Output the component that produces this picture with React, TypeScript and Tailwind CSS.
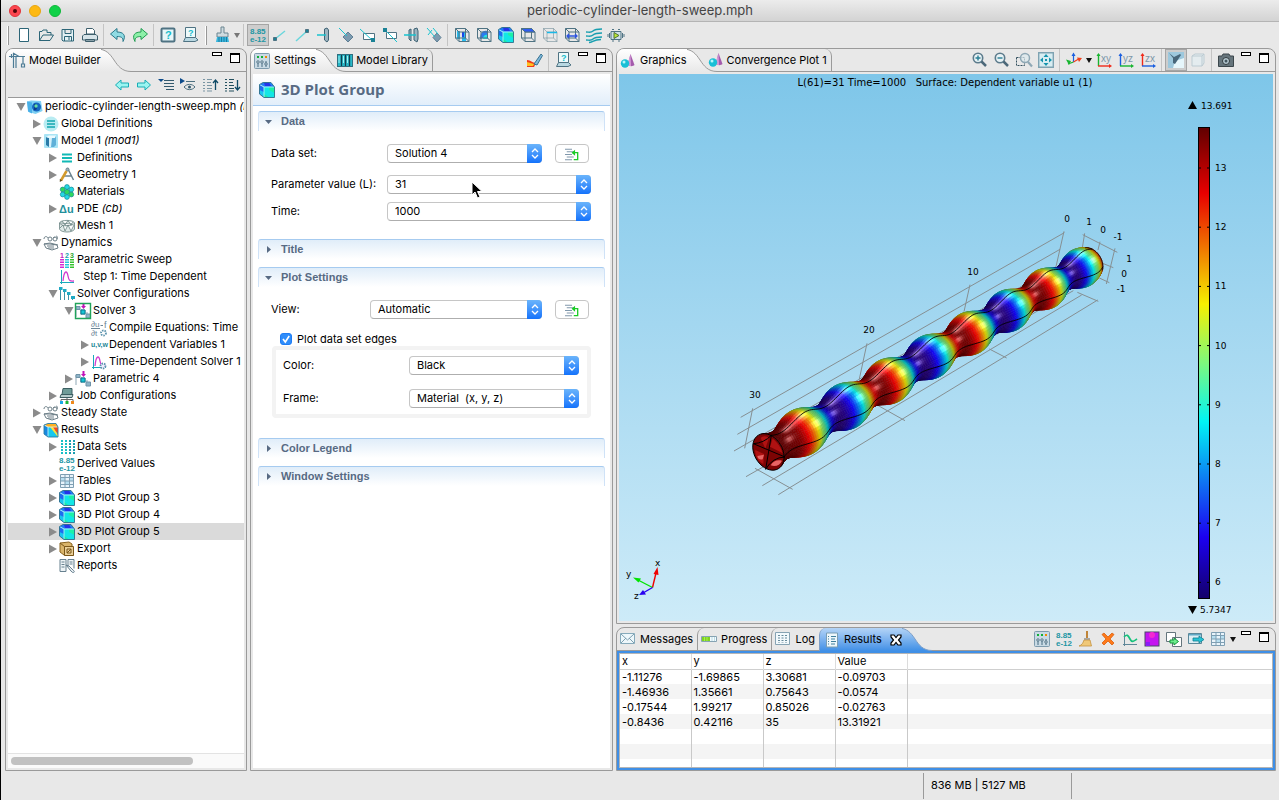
import { useState } from "react";
import type { ReactNode } from "react";

/* ---------- icons (16 × 16 grid) ---------- */

const S = "#4f7383";
const C = "#19c3cf";

const cube = (
  <>
    <path d="M.5 2.500 5 5v10.500L.5 12z" fill="#1c6df0" />
    <path d="M.5 8 5 10v5.500L.5 12z" fill="#19c4f0" />
    <path d="M.5 2.500 4 .5h8L15.500 5H5z" fill="#1f7cf5" />
    <path d="M5 .5h5L12 4H6z" fill="#2433e8" />
    <path d="M5 5h10.500v10.500H5z" fill="#12e6e6" />
    <path d="M10 5h5.500v6L10 8z" fill="#1cf0a8" />
    <path d="M5 12l5 3.500H5z" fill="#1fe8a0" />
    <path d="M.5 2.500 5 5h10.500M5 5v10.500" fill="none" stroke="#a8f6f4" strokeWidth=".9" />
    <path d="M.5 2.500 4 .5h8L15.500 5v10.500H5L.5 12z" fill="none" stroke="#2f6f8c" strokeWidth=".9" />
  </>
);

const wireCube = <path d="M1.500 1.500H11.500L15 5V14.500H5L1.500 11zM5 5H15M5 5 1.500 1.500M5 5V14.500M11.500 1.500V11H1.500M11.500 11 15 14.500" fill="none" stroke={S} />;

const num885 = (
  <g fill="#1e96a4" fontFamily="Liberation Sans" fontWeight="700" fontSize="8">
    <text x="0" y="7">8.85</text>
    <text x="0" y="15">e-12</text>
  </g>
);

const sliders = (
  <>
    <rect x=".5" y=".5" width="15" height="15" rx="1" fill="#c9dae4" stroke="#7e9bad" />
    <path d="M4 8v6M8 8v6M12 8v6" stroke="#496d82" />
    <g fill="#fff" stroke="#496d82"><circle cx="4" cy="9" r="1.200" /><circle cx="8" cy="9" r="1.200" /><circle cx="12" cy="11" r="1.200" /></g>
    <path d="M3 3h2v2H3zM7 3h2v2H7z" fill="#12b035" />
    <path d="M11 3h2v2h-2z" fill="#f08a00" />
  </>
);

const gridIcon = (
  <>
    <rect x="1.500" y="1.500" width="13" height="13" fill="#e9f4fb" />
    <path d="M2 5h4v3H2zM10 5h4v3h-4zM6 8h4v3H6z" fill="#b8dff0" />
    <path d="M1.500 1.500h13v13h-13zM1.500 4.500h13M1.500 8h13M1.500 11.500h13M6 1.500v13M10.500 1.500v13" fill="none" stroke="#7f9fb3" />
  </>
);

const helpDoc = (
  <>
    <path d="M3.500 .5h10v10h-10z" fill="#eefafb" stroke={S} />
    <path d="M3.500 10.500 1.500 14.500h11.500l3-1.500-2.500-2.500z" fill="#b9d8e2" stroke={S} />
    <text x="6" y="9" fontSize="9" fontWeight="700" fontFamily="Liberation Sans" fill="#16bccb">?</text>
  </>
);

const glasses = (
  <g fill="none" stroke="#6d7f88">
    <path d="M1 4C1 1 4 1 5 3M10 3c1-1 2-1 2 0M14 4c1-2 0-3-1-3" />
    <circle cx="7" cy="4" r="2" />
    <circle cx="12" cy="4" r="2" />
    <path d="M1 9l6-1 8 2M1 9l2 4 6 2 6-2-1-3-7-1zM4 11h7M5 13h6" />
  </g>
);

const stepsTree = (
  <>
    <path d="M1 4V14M6 6V12M12 9v4" stroke="#8fa7b5" />
    <path d="M1 3.500h4v3H1zM6 7h4v4H6zM11 11h4.500v4H11z" fill="#8fb4c8" stroke="#6f93a8" />
    <path d="M8.500 0v3" stroke="#c313b9" strokeWidth="2" />
    <path d="M6 3h5L8.500 6z" fill="#c313b9" />
    <path d="M6 7h4v4H6z" fill="#16c6d6" stroke="#0a7c92" />
  </>
);

const sine = (
  <>
    <path d="M2.500 1v14M1 13.500h14" stroke="#1aa9bb" fill="none" />
    <path d="M4 12C5 1 8 1 9 7s3 5 6 5" fill="none" stroke="#d13bd0" strokeWidth="1.300" />
  </>
);

const icons: Record<string, ReactNode> = {
  new: <path d="M3.500 1.500h9v13h-9z" fill="#fff" stroke="#2c6577" />,
  open: <path d="M1.500 13.500V4.500H4l1-1.500h4v2.500h4V8M1.500 13.500 5 8H15.500L12 13.500z" fill="none" stroke="#2c6577" />,
  save: <path d="M2 2.500h11.500V14H3L2 13zM5 2.500v4h6v-4M4.500 14v-4.500h7V14M9 10v3" fill="#e4f1f4" stroke="#2c6577" />,
  print: (
    <>
      <path d="M4.500 7V1.500h6l2 2V7z" fill="#fff" stroke="#3e5f6c" />
      <path d="M2 7.500h12l1.500 1.500v4H.5V9zM3.500 12.500h9v2h-9z" fill="#d7e4e9" stroke="#3e5f6c" />
    </>
  ),
  undo: <path d="M.5 7 7 1.500V5c6 0 9.500 3 6 9.500C13.500 10.500 11 9.500 7 9.500V12.500z" fill="#8fdbe3" stroke="#28788a" />,
  redo: <path d="M15.500 7 9 1.500V5C3 5-.5 8 3 14.500 2.500 10.500 5 9.500 9 9.500V12.500z" fill="#8df0a8" stroke="#1f9c50" />,
  help: (
    <>
      <rect x="1.500" y="1.500" width="13" height="13" rx="1" fill="#e7f6f8" stroke={S} strokeWidth="2" />
      <text x="5" y="12" fontSize="11" fontWeight="700" fontFamily="Liberation Sans" fill="#16bccb">?</text>
    </>
  ),
  helpDoc,
  brush: (
    <>
      <path d="M7 0h3v6h4v4H3V6h4z" fill="#cfdbe0" stroke="#6b8590" />
      <path d="M3 10h11l1 5H2z" fill="#38b6dd" />
      <path d="M5 10v5M7.500 10v5M10 10v5M12.500 10v5" stroke="#1c7ea3" />
    </>
  ),
  num885,
  line1: <><path d="M3 12 13 4" stroke="#69d6dc" strokeWidth="1.500" /><path d="M1.500 10.500h3v3h-3z" fill="#1b8296" stroke={S} /></>,
  line2: <><path d="M2 14 12 5" stroke="#69d6dc" strokeWidth="1.500" /><path d="M11.500 2.500h3v3h-3z" fill="#1b8296" stroke={S} /></>,
  disc: <><path d="M8.500 2 11 1l1.500 2v10L11 15l-2.500-2z" fill="#9db4c0" stroke="#3f6375" /><path d="M1 8h9" stroke={C} strokeWidth="1.500" /></>,
  diamond: <><path d="M10 5l5 5-5 5-5-5z" fill="#7d9bb0" stroke="#5f7f95" /><path d="M1 1l8 8" stroke={C} /></>,
  boxA: <><path d="M3.500 6.500h11v6h-11z" fill="#fff" stroke={S} /><path d="M0 2l12 11" stroke={C} /><path d="M11 11h4v4h-4z" fill="#1b8296" /></>,
  boxB: <><path d="M4.500 5.500h10v6h-10z" fill="#fff" stroke={S} /><path d="M3 3l12 12" stroke={C} /><path d="M1 1h4v4H1z" fill="#1b8296" /></>,
  discs: <><path d="M5 3l2-1v12l-2-2zM10 2l3-1 1 3v8l-1 3-3-2z" fill="#9db4c0" stroke="#3f6375" /><path d="M0 8h12" stroke={C} strokeWidth="1.500" /></>,
  diamonds: <><path d="M11 6l4 4.500-4 4.500-4-4.500z" fill="#7d9bb0" stroke="#5f7f95" /><path d="M1 1l8 9M2 8l4-5M7 1l5 6" stroke={C} /></>,
  cubeSlice: <><path d="M3 4h3v8H3zM8 5h4v9H8z" fill="#25bdf2" /><path d="M8 5h2v5H8z" fill="#1b47e8" />{wireCube}</>,
  cubeIso: <><path d="M4 12c0-6 3-9 7-8v6z" fill="#2b7bf0" /><path d="M7 12c0-3 2-5 5-4v4z" fill="#26e0e0" />{wireCube}</>,
  cube,
  cubeTop: <>{wireCube}<path d="M1.500 1.500h10L15 5H5z" fill="#2f5df2" stroke={S} /></>,
  cubeLine: <><g opacity=".45">{wireCube}</g><path d="M5 5.500h10" stroke="#18b9e8" strokeWidth="1.500" /></>,
  cubeArrow: <>{wireCube}<path d="M3 9h10M5 7 3 9l2 2M11 7l2 2-2 2" fill="none" stroke="#2d54e0" strokeWidth="1.300" /></>,
  stream: <path d="M0 5c3 0 5 1 7-1s5-2 9-2M0 9c3 0 5 1 7-1s5-2 9-2M0 13c3 0 5 1 7-1s5-2 9-2M3 15.500c4 0 4-3 12-3" fill="none" stroke="#199fb0" strokeWidth="1.400" />,
  film: <><path d="M3 4.500h10v8H3zM0 7v3M1.500 6v5M14.500 6v5M16 7v3M4 2.500h2M10 2.500h2M4 14h2M10 14h2" fill="#cfe0e6" stroke={S} /><path d="M6 5.500l5 3-5 3z" fill="#b8e830" stroke="#50703a" /></>,
  builder: <path d="M0 3.500h16M4.500 0v15M2.500 1v4M7 4v11M14 4v7M12.500 11h3v3h-3zM4 0l6 3.500" fill="none" stroke="#4d7c96" strokeWidth="1.200" />,
  sliders,
  library: <><rect x=".5" y="2.500" width="15" height="12" fill="#27b8c8" stroke="#2f6f80" /><path d="M4.500 3v11M8.500 3v11M12.500 3v11" stroke="#123d4c" strokeWidth="1.300" /><path d="M2 4v7M6.500 4v7M10.500 4v7" stroke="#9ff4f4" /></>,
  paint: <><path d="M0 8c4 0 5 3 9 3l-2 4H0z" fill="#f03a1a" /><path d="M0 10l7 2-1 2H0z" fill="#ffc020" /><path d="M7 12 14 2l1.500 1.500L10 13z" fill="#7fb9dd" stroke="#37718f" /></>,
  geo: <><path d="M10.500 1 14.500 12c-1.500 1.500-5 1.500-7 0z" fill="#a45bac" /><path d="M10.500 1l.5 12c-1.500 0-2.500-.3-3.500-1z" fill="#d59ad8" /><circle cx="5" cy="10.500" r="4.200" fill="#19bfd6" /><circle cx="4" cy="9" r="1.500" fill="#b4f6fa" /></>,
  left: <path d="M1.500 8 7 3v3h7.500v4H7v3z" fill="#9bf5f1" stroke="#18adb5" />,
  right: <path d="M14.500 8 9 3v3H1.500v4H9v3z" fill="#9bf5f1" stroke="#18adb5" />,
  listDown: <><path d="M0 2h6L3 5z" fill="#0d4b8a" /><path d="M6 3.500h10M6 6.500h10M6 9.500h10M8 12.500h8" stroke="#33596d" /></>,
  eye: <><path d="M0 1l5 3-5 3z" fill="#0d4b8a" /><path d="M6 4.500h9M4 10c3-3.500 8-3.500 11 0-3 3.500-8 3.500-11 0z" fill="none" stroke="#4d7080" /><circle cx="9.500" cy="10" r="1.500" fill="#33596d" /></>,
  listUp: <><path d="M1 2.500h2M5 2.500h5M1 5.500h2M5 5.500h4M1 8.500h2M5 8.500h5M1 11.500h2M5 11.500h5M1 14h2M5 14h5" stroke="#7a95a3" /><path d="M13.500 13V3M11 6l2.500-3L16 6" fill="none" stroke="#0f4a66" strokeWidth="1.300" /></>,
  listDn: <><path d="M1 2.500h2M5 2.500h5M1 5.500h2M5 5.500h4M1 8.500h2M5 8.500h5M1 11.500h2M5 11.500h5M1 14h2M5 14h5" stroke="#24505f" /><path d="M13.500 3v10M11 10l2.500 3L16 10" fill="none" stroke="#0f4a66" strokeWidth="1.300" /></>,
  root: <><path d="M0 2.500l4-1 10 .5 1.500 10-7 3-7-2z" fill="#7fd0f3" /><path d="M0 2.500l5 1v11l-4-2z" fill="#49b0e8" /><circle cx="9.500" cy="8" r="4.500" fill="#1566c0" /><path d="M7 5c2-1 3 0 3 3s-1 3-3 3z" fill="#0a3b8c" /><circle cx="9" cy="7" r="1.700" fill="#68dfa0" /></>,
  globalDef: <><circle cx="8" cy="8" r="7.500" fill="#b9ecf2" /><path d="M4 5h8M4 8h8M4 11h8" stroke="#12a7b0" strokeWidth="1.600" /></>,
  model: <><rect x="1" y="1" width="14" height="14" rx="1" fill="#a9e4f5" /><path d="M3 4l3 1v9l-3-2z" fill="#2a7ba8" /><path d="M3 4l3-1.500h7L12 5H6z" fill="#eafaff" /><path d="M6 5h6l1-2v9l-2 2H6z" fill="#5fb0d8" /><path d="M6 5h3l-1 9H6z" fill="#d5f1fb" /></>,
  def: <path d="M3 4.500h10M3 8h10M3 11.500h10" stroke="#12b9b6" strokeWidth="2" />,
  geometry: <><path d="M8.500 1l6 12M4 9h9" fill="none" stroke="#6d8490" strokeWidth="1.500" /><circle cx="8.500" cy="2.500" r="1.500" fill="#9fb0b8" stroke="#6d8490" /><path d="M7.500 4 2 13.500" stroke="#d39a2c" strokeWidth="2.500" /><path d="M.8 12v3l2.500-1.500z" fill="#5c4a20" /></>,
  materials: <g strokeWidth=".7" stroke="#0e8a94"><circle cx="8" cy="3" r="2.400" fill="#25d8e4" /><circle cx="3.700" cy="5.500" r="2.400" fill="#2fd85e" /><circle cx="12.300" cy="5.500" r="2.400" fill="#25d8e4" /><circle cx="3.700" cy="10.500" r="2.400" fill="#25d8e4" /><circle cx="12.300" cy="10.500" r="2.400" fill="#2fd85e" /><circle cx="8" cy="8" r="2.600" fill="#2fd85e" /><circle cx="8" cy="13" r="2.400" fill="#25d8e4" /></g>,
  pde: <text x="0" y="12" fontSize="11" fontWeight="700" fontFamily="Liberation Sans" fill="#23909c">Δu</text>,
  mesh: <path d="M.5 5C1 1.500 15 1.500 15.500 5v6c-1 4-14 4-15 0zM.5 5c1 3.500 14 3.500 15 0M3 3l3 4 3-4.500L12 7l2-3M1 10l3-3 2 6 3-6 3 6 3-6M1 5l12 1" fill="#dfe9e7" stroke="#6b8483" strokeWidth=".8" />,
  glasses,
  sweep: (
    <>
      <text x="1" y="6" fontSize="7" fontWeight="700" fontFamily="Liberation Sans" fill="#c322c0">1</text>
      <text x="6" y="6" fontSize="7" fontWeight="700" fontFamily="Liberation Sans" fill="#1a9eb0">2</text>
      <text x="11" y="6" fontSize="7" fontWeight="700" fontFamily="Liberation Sans" fill="#2ca82c">3</text>
      <path d="M3 7v9" stroke="#d32bd0" strokeWidth="4" strokeDasharray="1.500 1" />
      <path d="M8 7v9" stroke="#22c8d8" strokeWidth="4" strokeDasharray="1.500 1" />
      <path d="M13 7v9" stroke="#35c22f" strokeWidth="4" strokeDasharray="1.500 1" />
    </>
  ),
  sine,
  solverCfg: <><path d="M1.500 3v11M5.500 5v9M9.500 8v6M13.500 11v3" stroke="#3e93a8" /><path d="M0 1h3.500v3H0zM4 3h3.500v3H4zM8 6h3.500v3H8zM12 10h4v3h-4z" fill="#1fa9c4" /></>,
  solver: <>{stepsTree}<path d="M.5.500h15v15H.5z" fill="none" stroke="#21a35a" strokeWidth="1.400" /></>,
  param: stepsTree,
  compile: <><g fill="#6d8698" fontFamily="Liberation Sans" fontSize="8"><text x="0" y="7">∂u</text><text x="0" y="16">∂t</text></g><path d="M0 8.500h9" stroke="#6d8698" /><path d="M9.500 5.500h2.500" stroke="#6d8698" /><text x="13" y="8" fontSize="9" fontFamily="Liberation Sans" fill="#6d8698">f</text><circle cx="12.500" cy="13" r="2.500" fill="none" stroke="#5c93ad" strokeWidth="1.800" strokeDasharray="1.500 1" /></>,
  uvw: <text x="0" y="10" fontSize="7" fontWeight="700" fontFamily="Liberation Sans" fill="#1b8797">u,v,w</text>,
  timeSolver: <>{sine}<circle cx="12" cy="12" r="2.500" fill="#eef" stroke="#5c93ad" strokeWidth="1.800" strokeDasharray="1.500 1" /></>,
  job: <><path d="M4 .5h9v6H3z" fill="#6f9c98" stroke="#3c5f62" /><path d="M2 6.500h12l-1 3H1z" fill="#b8cdcc" stroke="#3c5f62" /><path d="M8 10v3M2 13v-1.500h12V13" fill="none" stroke="#666" /><path d="M1 13h3v3H1z" fill="#1aa8e8" /><path d="M6.500 13h3v3h-3z" fill="#1fb63c" /><path d="M12 13h3v3h-3z" fill="#f08a1c" /></>,
  results: <><path d="M1 3l4 2v10l-4-3z" fill="#1688e0" /><path d="M1 3l4-1.500h8L15 5H5z" fill="#ffb020" /><path d="M5 5h10v10H5z" fill="#17c8ee" /><path d="M9 5h6v7z" fill="#f84a1a" /><path d="M7 5h3l5 8v2z" fill="#ffe23a" /><path d="M1 3l4 2h10M5 5v10" fill="none" stroke="#d8f6fa" strokeWidth=".8" /><path d="M1 3l4-1.500h8L15 5v10H5l-4-3z" fill="none" stroke="#2b7da5" strokeWidth=".9" /></>,
  dataSets: <g strokeWidth="2" strokeDasharray="2 1"><path d="M3 1v14M7 1v14" stroke="#16c1c6" /><path d="M11 1v14M15 1v14" stroke="#1b9fb0" /></g>,
  grid: gridIcon,
  export: <><path d="M1 2l9-1 3 2v9l2 2H5l-4-3z" fill="#d9b46a" stroke="#8a6420" /><path d="M5.500 5.500h9v9h-9z" fill="#e9cf98" stroke="#7a5618" /><path d="M1 2l4.500 3.500M8 8h4v4H8zM8 12l4-4" fill="none" stroke="#7a5618" /></>,
  reports: <path d="M1 1.500h6v12H1zM9 1.500h6v9M9 1.500v7M2.500 4h3M2.500 6.500h3M2.500 9h3M10.500 4h3M10.500 6h3M7 7l5 6c2 3 5 1 2-1L10 8z" fill="#edf3f6" stroke="#67808f" />,
  zoomIn: <><circle cx="6" cy="6" r="4.700" fill="#e8f2f5" stroke="#5c7b8c" strokeWidth="1.600" /><path d="M9.500 9.500 14 14" stroke="#4c6879" strokeWidth="2.500" /><path d="M3.500 6h5M6 3.500v5" stroke="#277f95" strokeWidth="1.400" /></>,
  zoomOut: <><circle cx="6" cy="6" r="4.700" fill="#e8f2f5" stroke="#5c7b8c" strokeWidth="1.600" /><path d="M9.500 9.500 14 14" stroke="#4c6879" strokeWidth="2.500" /><path d="M3.500 6h5" stroke="#277f95" strokeWidth="1.400" /></>,
  zoomBox: <><path d="M.5 5.500h8v8h-8z" fill="none" stroke="#33505f" strokeDasharray="2 1" /><circle cx="9" cy="6" r="4.500" fill="#dde9ee" fillOpacity=".7" stroke="#8fa8b5" strokeWidth="1.500" /><path d="M12 10l4 4.500" stroke="#8fa8b5" strokeWidth="2.200" /></>,
  zoomFit: <><path d="M.7.700h14.600v14.600H.7z" fill="#d8edf2" stroke="#7fa3b2" strokeWidth="1.400" /><path d="M8 2l2.500 3h-5zM8 14l2.500-3h-5zM2 8l3-2.500v5zM14 8l-3-2.500v5zM7 7h2v2H7z" fill="#1594ae" /></>,
  axes: <><path d="M7.500 10V3" stroke="#1a5fe0" strokeWidth="1.200" /><path d="M5.500 4l2-3.500 2 3.500z" fill="#1a5fe0" /><path d="M7.500 10 2 12" stroke="#18b530" strokeWidth="1.300" /><path d="M0 7.500l5 1.500L3 13z" fill="#18b530" /><path d="M7.500 10l6-3.500" stroke="#f0401a" strokeWidth="1.200" /><path d="M11 5.500l5 .5-3 4z" fill="#f0401a" /></>,
  xy: <><path d="M2.500 14V2" stroke="#18b530" strokeWidth="1.400" /><path d="M2 14h12" stroke="#f02a1a" strokeWidth="1.400" /><path d="M.5 4 2.500 1l2 3z" fill="#18b530" /><path d="M13 12l3 2-3 2z" fill="#f02a1a" /><text x="5" y="10" fontSize="10" fontFamily="Liberation Sans" fill="#7d97a8">xy</text></>,
  yz: <><path d="M2.500 14V2" stroke="#1a5fe0" strokeWidth="1.400" /><path d="M2 14h12" stroke="#18b530" strokeWidth="1.400" /><path d="M.5 4 2.500 1l2 3z" fill="#1a5fe0" /><path d="M13 12l3 2-3 2z" fill="#18b530" /><text x="5" y="10" fontSize="10" fontFamily="Liberation Sans" fill="#7d97a8">yz</text></>,
  zx: <><path d="M2.500 14V2" stroke="#f02a1a" strokeWidth="1.400" /><path d="M2 14h12" stroke="#1a5fe0" strokeWidth="1.400" /><path d="M.5 4 2.500 1l2 3z" fill="#f02a1a" /><path d="M13 12l3 2-3 2z" fill="#1a5fe0" /><text x="5" y="10" fontSize="10" fontFamily="Liberation Sans" fill="#7d97a8">zx</text></>,
  light: <><rect width="16" height="16" fill="#9dc8dd" /><path d="M7 9l9-3v10H5z" fill="#e6f6fb" /><path d="M1 1l5 4 6-3 1 1-6 9-2-1V6z" fill="#47667a" /></>,
  transparent: <path d="M2 4l3-2h9v9l-2 3H2zM2 4h10v10M12 4l2-2" fill="#e4ecef" stroke="#bccbd2" />,
  camera: <><path d="M.5 4h3.500l1-2h6l1 2h3.500v10.500H.5z" fill="#66757c" stroke="#3c474c" /><circle cx="8" cy="9" r="3.500" fill="#b9ccd4" stroke="#30393d" /><circle cx="8" cy="9" r="1.500" fill="#43565f" /></>,
  mail: <><path d="M.5 2.500h14v10H.5z" fill="#edf7fb" stroke="#86aabb" /><path d="M1 3l6.500 6L14 3M1 12l5-5M14 12 9 7" fill="none" stroke="#7d9fb0" /></>,
  progress: <><path d="M.5 5.500h15v5H.5z" fill="#f4fbfd" stroke="#86a3b3" /><path d="M1 6h8v4H1z" fill="#7fd41e" /><path d="M3.500 6v4M6 6v4" stroke="#a8ee50" /><path d="M11 6v4M13.500 6v4" stroke="#b9dbe6" /></>,
  log: <><path d="M.5 1.500h14v12H.5z" fill="#f2f9fc" stroke="#86a3b3" /><path d="M4 4v8M7.500 4v8M11 4v8" stroke="#65899a" strokeWidth="2" strokeDasharray="1 1.500" /></>,
  resultsTab: <><path d="M2.500 1h11v14h-11z" fill="#eef7fc" stroke="#7b9db2" /><path d="M4 4.500h1M7 4.500h5M4 7h1M7 7h4M4 9.500h1M7 9.500h5M4 12h1M7 12h4" stroke="#3f7f9c" /></>,
  broom: <><path d="M8 0h2v7H8z" fill="#c08438" /><path d="M6 7h6v2H6z" fill="#a8a8a8" /><path d="M6 9h6l1.500 6H1c3-1 4-3 5-6z" fill="#f0c878" stroke="#c59340" strokeWidth=".8" /></>,
  del: <path d="M2 3.500 4 2 8 6l4-4 2 1.500L10 8l4 4-2 2-4-4-4 4-2-2 4-4z" fill="#ff7a1a" stroke="#d8600f" strokeWidth=".8" />,
  plot: <><path d="M2.500 1v14M1 13.500h14" stroke="#5f8798" fill="none" /><path d="M2 6c3-3 4-2 6 2s4 2 7 0" fill="none" stroke="#15c27b" strokeWidth="1.700" /></>,
  magenta: <><rect x="1" y="1" width="14" height="14" fill="#c414f0" stroke="#484868" /><circle cx="8" cy="4" r="3" fill="#f22ad0" /><path d="M2 11h4v4H2z" fill="#8a1cf8" /></>,
  copy: <><path d="M.5 1.500h9v9h-9zM6.500 6.500h9v9h-9z" fill="#fff" stroke="#64757d" /><path d="M4 9h4V7l4.500 3.500L8 14v-2H4z" fill="#6cec8c" stroke="#14983c" /></>,
  exp: <><path d="M.5 2.500h13v10H.5z" fill="#dceef5" stroke="#5b8799" /><path d="M1 3h12v1.500H1z" fill="#60a8c4" /><path d="M5 7h6V5l5 3.500-5 3.500v-2H5z" fill="#25c3d4" stroke="#117f93" strokeWidth=".8" /></>,
  goto: <><path d="M0 2.500h8M2 5.500h8M0 8.500h8M2 11.500h8M0 14.500h8" stroke="#8198ac" strokeWidth="1.200" /><path d="M10 6.500h4.500v8H10" fill="none" stroke="#1bcb27" strokeWidth="1.500" /><path d="M7.500 6.500l4-3.500v7z" fill="#1bcb27" /></>,
};

function Icon({ name }: { name: string }) {
  return (
    <svg viewBox="0 0 16 16" className="size-4 shrink-0 overflow-visible" aria-hidden="true">
      {icons[name]}
    </svg>
  );
}

function Tool({ name, pressed }: { name: string; pressed?: boolean }) {
  return (
    <button
      aria-label={name}
      className={
        pressed
          ? "flex h-[22px] w-[22px] shrink-0 items-center justify-center border border-[#a5a5a5] bg-[#cdcdcd]"
          : "flex h-[22px] w-[22px] shrink-0 items-center justify-center"
      }
    >
      <Icon name={name} />
    </button>
  );
}

const Sep = () => <span className="mx-[2px] h-[22px] w-[2px] shrink-0 border-l border-[#c4c4c4]" />;
const Handle = () => <span className="mx-1 h-[19px] w-[2px] shrink-0 border-r border-[#979797] bg-white" />;
const Caret = ({ grey }: { grey?: boolean }) => (
  <button aria-label="More" className="flex h-[22px] w-2 shrink-0 items-center justify-center">
    <svg viewBox="0 0 6 5" className="h-[5px] w-[6px]"><path d="M0 0h6L3 5z" fill={grey ? "#777" : "#111"} /></svg>
  </button>
);

function MinMax() {
  return (
    <div className="flex pr-[2px] pb-[6px]">
      <button aria-label="Minimize" className="flex h-[14px] w-[18px] items-start justify-center pt-[2px]">
        <span className="h-1 w-[10px] border border-black bg-white" />
      </button>
      <button aria-label="Maximize" className="flex h-[14px] w-[18px] items-center justify-center pt-[2px]">
        <span className="h-[10px] w-[10px] border border-t-2 border-black bg-white" />
      </button>
    </div>
  );
}

/* ---------- tabs ---------- */

function Swoop({ blue }: { blue?: boolean }) {
  const id = blue ? "swoop-blue" : "swoop-grey";
  return (
    <svg viewBox="0 0 34 23" className="-ml-1 h-[23px] w-[34px] shrink-0" aria-hidden="true">
      <defs>
        <linearGradient id={id} x1="0" y1="0" x2="0" y2="1">
          <stop offset="0" stopColor={blue ? "#b4d4f6" : "#ffffff"} />
          <stop offset="1" stopColor={blue ? "#3f8fe6" : "#e8e8e8"} />
        </linearGradient>
      </defs>
      <path d="M0 0C9 0 13 5 17 11S25 22.500 34 22.500V23H0z" fill={`url(#${id})`} />
      <path d="M0 0C9 0 13 5 17 11S25 22.500 34 22.500" fill="none" stroke={blue ? "#7d9fc8" : "#9a9a9a"} />
    </svg>
  );
}

function ActiveTab({ icon, label }: { icon: string; label: string }) {
  return (
    <>
      <button className="relative z-10 flex h-[23px] shrink-0 items-center gap-1 rounded-tl-[7px] bg-linear-to-b from-white to-[#e8e8e8] pl-[3px]">
        <Icon name={icon} />
        {label}
      </button>
      <Swoop />
    </>
  );
}

const panel = "flex flex-col rounded-t-[8px] border border-[#9a9a9a] bg-[#e8e8e8]";
const strip = "flex h-[23px] min-w-0 flex-1 items-center border-b border-[#9a9a9a]";
const sideTab = "-ml-[9px] flex h-[23px] shrink-0 items-center gap-[3px] rounded-tr-[7px] border-r border-[#9a9a9a] pr-1";

/* ---------- model tree ---------- */

type Row = [level: number, arrow: "open" | "closed" | "", icon: string, label: string, tag?: string];

const rows: Row[] = [
  [0, "open", "root", "periodic-cylinder-length-sweep.mph", "(root)"],
  [1, "closed", "globalDef", "Global Definitions"],
  [1, "open", "model", "Model 1", "(mod1)"],
  [2, "closed", "def", "Definitions"],
  [2, "closed", "geometry", "Geometry 1"],
  [2, "", "materials", "Materials"],
  [2, "closed", "pde", "PDE", "(cb)"],
  [2, "", "mesh", "Mesh 1"],
  [1, "open", "glasses", "Dynamics"],
  [2, "", "sweep", "Parametric Sweep"],
  [2, "", "sine", "\u00a0 Step 1: Time Dependent"],
  [2, "open", "solverCfg", "Solver Configurations"],
  [3, "open", "solver", "Solver 3"],
  [4, "", "compile", "Compile Equations: Time"],
  [4, "closed", "uvw", "Dependent Variables 1"],
  [4, "closed", "timeSolver", "Time-Dependent Solver 1"],
  [3, "closed", "param", "Parametric 4"],
  [2, "closed", "job", "Job Configurations"],
  [1, "closed", "glasses", "Steady State"],
  [1, "open", "results", "Results"],
  [2, "closed", "dataSets", "Data Sets"],
  [2, "", "num885", "Derived Values"],
  [2, "closed", "grid", "Tables"],
  [2, "closed", "cube", "3D Plot Group 3"],
  [2, "closed", "cube", "3D Plot Group 4"],
  [2, "closed", "cube", "3D Plot Group 5"],
  [2, "closed", "export", "Export"],
  [2, "", "reports", "Reports"],
];

const indents = ["pl-2", "pl-6", "pl-10", "pl-14", "pl-[72px]"];

function ModelBuilder() {
  const [selected, setSelected] = useState(25);
  return (
    <section className={`${panel} w-[242px] shrink-0`}>
      <div className="flex">
        <ActiveTab icon="builder" label="Model Builder" />
        <div className={`${strip} justify-end`}><MinMax /></div>
      </div>
      <div className="flex h-[25px] shrink-0 items-center justify-end pr-[3px]">
        {["left", "right", "listDown", "eye", "listUp", "listDn"].map((n) => <Tool key={n} name={n} />)}
      </div>
      <div className="mx-[2px] mb-[2px] flex min-h-0 flex-1 flex-col border-t border-[#9a9a9a] bg-white">
        <ul className="flex-1 overflow-hidden">
          {rows.map(([level, arrow, icon, label, tag], i) => (
            <li key={i}>
              <button
                onClick={() => setSelected(i)}
                className={`flex h-[17px] w-full items-center whitespace-nowrap ${indents[level]} ${selected === i ? "bg-[#dadada]" : ""}`}
              >
                <svg viewBox="0 0 11 10" className="h-[10px] w-[11px] shrink-0">
                  {arrow && <path d={arrow === "open" ? "M.5 1h9L5 9z" : "M1 .500 9 5 1 9.500z"} fill="#8b8b8b" />}
                </svg>
                <Icon name={icon} />
                <span className="pl-[2px]">
                  {label} {tag && <i>{tag}</i>}
                </span>
              </button>
            </li>
          ))}
        </ul>
        <div className="flex h-[15px] shrink-0 items-center border-t border-[#e3e3e3] bg-[#fafafa] px-[3px]">
          <div className="h-2 w-[79%] rounded-full bg-[#c1c1c1]" />
        </div>
      </div>
    </section>
  );
}

/* ---------- settings ---------- */

function Select({ id, options, children }: { id: string; options: string[]; children?: ReactNode }) {
  return (
    <div className="relative flex flex-1">
      <select id={id} className="h-[19px] w-full appearance-none rounded-[4px] border border-[#c6c6c6] border-b-[#aeaeae] bg-white pr-5 pl-[7px] text-[11px] text-black">
        {options.map((o) => <option key={o}>{o}</option>)}
      </select>
      <span className="pointer-events-none absolute top-0 right-0 flex h-[19px] w-[15px] items-center justify-center rounded-r-[4px] bg-linear-to-b from-[#6ab4fb] to-[#1272fb]">
        <svg viewBox="0 0 8 11" className="h-[11px] w-2"><path d="M1 4l3-3 3 3M1 7l3 3 3-3" fill="none" stroke="#fff" strokeWidth="1.300" /></svg>
      </span>
      {children}
    </div>
  );
}

function Section({ title, open, children }: { title: string; open?: boolean; children?: ReactNode }) {
  return (
    <div>
      <h3 className="h-5 rounded-t-[3px] border-x border-t border-x-[#cfe2f7] border-t-[#a6cbf0] bg-linear-to-b from-[#e0edf9] to-white">
        <button className="flex h-[19px] w-full items-center gap-2 pl-[5px] font-['Liberation_Sans',sans-serif] text-[11px] font-bold text-[#576a83]">
          <svg viewBox="0 0 9 9" className="size-[9px]">
            <path d={open ? "M1 3h7L4.500 7z" : "M3 1l4 3.500L3 8z"} fill="#576a83" />
          </svg>
          {title}
        </button>
      </h3>
      {children}
    </div>
  );
}

const GotoButton = () => (
  <button aria-label="Go to source" className="mr-[2px] ml-[13px] flex h-[19px] w-[34px] items-center justify-center rounded-[4px] border border-[#c6c6c6] bg-white">
    <svg viewBox="0 0 16 16" className="h-[14px] w-[14px]">{icons.goto}</svg>
  </button>
);

function Settings() {
  const [edges, setEdges] = useState(true);
  return (
    <section className={`${panel} w-[363px] shrink-0`}>
      <div className="flex">
        <ActiveTab icon="sliders" label="Settings" />
        <div className={strip}>
          <button className={sideTab}>
            <Icon name="library" />
            Model Library
          </button>
          <div className="flex-1" />
          <Tool name="paint" /><Sep /><Tool name="helpDoc" />
          <MinMax />
        </div>
      </div>
      <div className="m-[2px] flex-1 bg-white">
        <h2 className="flex h-8 items-center gap-[6px] border-b border-[#a6cbf0] bg-linear-to-b from-white to-[#e2eefa] pl-[6px] font-['Open_Sans',sans-serif] text-[15px] font-bold text-[#576a83]">
          <Icon name="cube" />
          3D Plot Group
        </h2>
        <form className="flex flex-col px-[5px] pt-[5px]">
          <Section title="Data" open>
            <div className="flex flex-col pt-[13px] pr-[14px] pb-[18px] pl-[13px]">
              <div className="flex items-center">
                <label htmlFor="dataset" className="w-[116px] shrink-0">Data set:</label>
                <Select id="dataset" options={["Solution 4", "Solution 3"]} />
                <GotoButton />
              </div>
              <div className="mt-3 flex items-center">
                <label htmlFor="param" className="w-[116px] shrink-0">Parameter value (L):</label>
                <Select id="param" options={["31", "32"]}>
                  <svg viewBox="0 0 12 18" className="pointer-events-none absolute top-[6px] left-[84px] h-[18px] w-3">
                    <path d="M1 1v13l3-3 2.500 6 2.500-1-2.500-5.500H11z" fill="#000" stroke="#fff" />
                  </svg>
                </Select>
              </div>
              <div className="mt-2 flex items-center">
                <label htmlFor="time" className="w-[116px] shrink-0">Time:</label>
                <Select id="time" options={["1000", "900"]} />
              </div>
            </div>
          </Section>
          <div className="flex flex-col gap-2">
            <Section title="Title" />
            <Section title="Plot Settings" open>
              <div className="flex flex-col pt-[13px] pr-[14px] pb-3 pl-[13px]">
                <div className="flex items-center">
                  <label htmlFor="view" className="w-[99px] shrink-0">View:</label>
                  <Select id="view" options={["Automatic", "View 1"]} />
                  <GotoButton />
                </div>
                <label className="mt-[13px] flex h-[14px] items-center gap-[5px] pl-[9px]">
                  <span className="relative flex size-3">
                    <input type="checkbox" checked={edges} onChange={() => setEdges(!edges)} className="size-3 appearance-none rounded-[3px] border border-[#c0c0c0] bg-white checked:border-[#1e7cf4] checked:bg-[#2f8dfa]" />
                    {edges && (
                      <svg viewBox="0 0 12 12" className="pointer-events-none absolute inset-0 size-3">
                        <path d="M3 6l2.300 3L9.200 3" fill="none" stroke="#fff" strokeWidth="1.600" />
                      </svg>
                    )}
                  </span>
                  Plot data set edges
                </label>
                <div className="ml-px flex flex-col gap-[14px] rounded-[4px] border-4 border-[#f3f3f3] pt-[6px] pr-2 pb-[6px] pl-[7px]">
                  <div className="flex items-center">
                    <label htmlFor="color" className="w-[126px] shrink-0">Color:</label>
                    <Select id="color" options={["Black", "Gray"]} />
                  </div>
                  <div className="flex items-center">
                    <label htmlFor="frame" className="w-[126px] shrink-0">Frame:</label>
                    <Select id="frame" options={["Material\u00a0 (x, y, z)", "Spatial"]} />
                  </div>
                </div>
              </div>
            </Section>
            <Section title="Color Legend" />
            <Section title="Window Settings" />
          </div>
        </form>
      </div>
    </section>
  );
}

/* ---------- 3D surface plot ---------- */

type Vec = [number, number, number];
const dot = (a: Vec, b: Vec) => a[0] * b[0] + a[1] * b[1] + a[2] * b[2];
const unit = (a: Vec): Vec => {
  const n = Math.hypot(a[0], a[1], a[2]);
  return [a[0] / n, a[1] / n, a[2] / n];
};
const clamp = (v: number) => Math.max(0, Math.min(1, v));
const RAD = Math.PI / 180;

const T0 = -0.24;
const T1 = 7.76;
const TILT = 0.72;
const AXIS: Vec = [0.598, 0.352, -0.72];
const SIDE: Vec = [0.507, -0.862, 0];
const FRONT: Vec = [0.62, 0.365, 0.694];

const radius = (t: number) => (1 - 0.024 * t) * (59 - 13 * Math.cos(2 * Math.PI * t));
const center = (t: number) => {
  const x = 148 + 136.5 * t - 2.1 * t * t;
  return [x, 657 - (x - 283) * 0.5886];
};

function surfacePoint(t: number, deg: number) {
  const [cx, cy] = center(t);
  const a = radius(t);
  const s = Math.sin(deg * RAD) * a;
  const c = Math.cos(deg * RAD) * a * TILT;
  return [cx + s * 0.507 + c * 0.862, cy + s * 0.862 - c * 0.507];
}

function normalAt(t: number, deg: number): Vec {
  const s = Math.sin(deg * RAD);
  const c = Math.cos(deg * RAD);
  const slope = 0.378 * Math.sin(2 * Math.PI * t);
  return unit([
    SIDE[0] * s + FRONT[0] * c - slope * AXIS[0],
    SIDE[1] * s + FRONT[1] * c - slope * AXIS[1],
    SIDE[2] * s + FRONT[2] * c - slope * AXIS[2],
  ]);
}

function jet(u: number): Vec {
  const tint = 0.16 * clamp(1 - u / 0.25);
  return [
    clamp(1.5 - Math.abs(4 * u - 3)) + tint,
    clamp(1.5 - Math.abs(4 * u - 2)),
    clamp(1.5 - Math.abs(4 * u - 1)),
  ];
}

function valueAt(t: number) {
  if (t < 0.1) return 1;
  const v = t > 7.1 ? -Math.cos(Math.PI * (t - 7.08) * 1.15) : Math.cos(Math.PI * (t - 0.1));
  return Math.sign(v) * Math.pow(Math.abs(v), 1.35);
}

const H1 = unit([0.6, 0.38, 0.7]);
const H2 = unit([0.02, 0.72, 0.69]);

function shade(t: number, deg: number) {
  const n = normalAt(t, deg);
  const base = jet((valueAt(t) + 1) / 2);
  const diffuse = 0.55 + 0.42 * clamp(n[2]);
  const spec = 0.42 * Math.pow(clamp(dot(n, H1)), 60) + 0.5 * Math.pow(clamp(dot(n, H2)), 50);
  const rgb = base.map((k) => Math.round(255 * clamp(k * diffuse + spec)));
  return `rgb(${rgb[0]},${rgb[1]},${rgb[2]})`;
}

const pts = (list: number[][]) => list.map((p) => `${p[0].toFixed(1)},${p[1].toFixed(1)}`).join(" ");

const SLICES = 220;
const STEP = 8;
const facets: { points: string; fill: string }[] = [];
for (let i = SLICES - 1; i >= 0; i--) {
  const a = T0 + ((T1 - T0) * i) / SLICES;
  const b = T0 + ((T1 - T0) * (i + 1)) / SLICES;
  for (let d = -120; d < 120; d += STEP) {
    if (normalAt((a + b) / 2, d + STEP / 2)[2] <= -0.1) continue;
    facets.push({
      points: pts([surfacePoint(a, d), surfacePoint(b, d), surfacePoint(b, d + STEP), surfacePoint(a, d + STEP)]),
      fill: shade((a + b) / 2, d + STEP / 2),
    });
  }
}

const edgeLine = (deg: number) =>
  pts(Array.from({ length: 161 }, (_, i) => surfacePoint(T0 + ((T1 - T0) * i) / 160, deg)));
const arc = (t: number, from: number, to: number) =>
  pts(Array.from({ length: 41 }, (_, i) => surfacePoint(t, from + ((to - from) * i) / 40)));

const gridPath =
  "M32 652 1003 98M22 703 990 148M12 753 978 200M68 625 44 745M411 430 388 537M720 254 702 335M1002 94 978 200" +
  "M48 830 1030 272M97 857 1055 285M145 884 1103 300M75 805 188 868M445 617 525 662M778 447 830 474M1042 277 1105 304" +
  "M1058 104 1162 157M1064 100 1056 150M1110 125 1104 150M1155 145 1129 252M1118 190 1150 203M1108 234 1138 248";

const axisLabels: [number, number, string][] = [
  [1067, 222, "0"], [1089, 225, "1"], [1103, 233, "0"], [1118, 240, "-1"], [1129, 262, "1"],
  [1124, 277, "0"], [1121, 292, "-1"], [973, 275, "10"], [869, 333, "20"], [755, 398, "30"],
];

function Plot() {
  return (
    <svg
      viewBox="619 74 654 547"
      className="m-[2px] min-h-0 w-auto flex-1 bg-linear-to-b from-[#7ec6e9] to-[#cdebf8]"
      fontFamily="'DejaVu Sans', sans-serif"
      fontSize="9"
      role="img"
      aria-label="Surface: Dependent variable u1"
    >
      <defs>
        <linearGradient id="legend" x1="0" y1="0" x2="0" y2="1">
          <stop offset="0" stopColor="#600000" />
          <stop offset=".14" stopColor="#e80000" />
          <stop offset=".375" stopColor="#f6f000" />
          <stop offset=".5" stopColor="#7df87d" />
          <stop offset=".625" stopColor="#00f4f4" />
          <stop offset=".87" stopColor="#1c00f0" />
          <stop offset="1" stopColor="#14006a" />
        </linearGradient>
      </defs>
      <text x="945" y="86" textAnchor="middle" fontSize="10">{"L(61)=31 Time=1000\u00a0\u00a0 Surface: Dependent variable u1 (1)"}</text>
      <g transform="translate(730 200) scale(.33333)">
        <path d={gridPath} stroke="#868f92" strokeWidth="3" fill="none" />
        {facets.map((f, i) => (
          <polygon key={i} points={f.points} fill={f.fill} stroke={f.fill} strokeWidth="1.500" />
        ))}
        <g fill="none" stroke="#000" strokeWidth="2.600">
          <polyline points={edgeLine(-42)} />
          <polyline points={edgeLine(40)} />
          <polyline points={arc(T1, -75, 55)} />
        </g>
        <polygon points={arc(T0, 0, 360)} fill="#7d0404" stroke="#000" strokeWidth="3" />
        <path d="M92 714c8-8 20-6 24 2l-10 30zM76 750l26 12-2 30c-16-8-26-24-24-42zM128 716c14 10 26 28 30 44l-38-20z" fill="#b01212" />
        <path d="M82 768l20-4-4 14c-8 2-14 0-16-10zM122 796c8-14 20-18 34-14-6 14-20 20-34 14z" fill="#e86464" />
        <path d="M124 706 107 808M70 731l95 40M70 731q32-2 54-25M107 808q20-36 58-37" fill="none" stroke="#000" strokeWidth="3" />
      </g>
      {axisLabels.map(([x, y, s]) => (
        <text key={`${x}${y}`} x={x} y={y} textAnchor="middle">{s}</text>
      ))}
      <path d="M1188 109h9l-4.500-8z" />
      <text x="1201" y="109">13.691</text>
      <rect x="1198.500" y="127.500" width="11" height="471" fill="url(#legend)" stroke="#000" />
      {[13, 12, 11, 10, 9, 8, 7, 6].map((n, i) => (
        <g key={n}>
          <path d={`M1198 ${168 + i * 59.2}h3M1207 ${168 + i * 59.2}h3`} stroke="#000" />
          <text x="1215" y={171 + i * 59.2}>{n}</text>
        </g>
      ))}
      <path d="M1188 606h9l-4.500 8z" />
      <text x="1200" y="613">5.7347</text>
      <path d="M652.500 587.500 656 573" stroke="#f00000" strokeWidth="1.400" />
      <path d="M657.500 567l1 8-5-1z" fill="#f00000" />
      <path d="M652.500 587.500 638 580" stroke="#00e400" strokeWidth="1.400" />
      <path d="M633 577.500l8 1-2.500 4z" fill="#00e400" />
      <path d="M652.500 587.500 643 593" stroke="#2a00f0" strokeWidth="1.400" />
      <path d="M639 595l4-5 3 4.500z" fill="#2a00f0" />
      <text x="655" y="566">x</text>
      <text x="626" y="577">y</text>
      <text x="634" y="599">z</text>
    </svg>
  );
}

function Graphics() {
  return (
    <section className={`${panel} min-h-0 flex-1`}>
      <div className="flex">
        <ActiveTab icon="geo" label="Graphics" />
        <div className={strip}>
          <button className={sideTab}>
            <Icon name="geo" />
            Convergence Plot 1
          </button>
          <div className="flex-1" />
          <Tool name="zoomIn" /><Tool name="zoomOut" /><Tool name="zoomBox" /><Tool name="zoomFit" /><Sep />
          <Tool name="axes" /><Caret /><Tool name="xy" /><Tool name="yz" /><Tool name="zx" /><Sep />
          <Tool name="light" pressed /><Tool name="transparent" /><Sep /><Tool name="camera" />
          <MinMax />
        </div>
      </div>
      <Plot />
    </section>
  );
}

/* ---------- results table ---------- */

const data = [
  ["-1.11276", "-1.69865", "3.30681", "-0.09703"],
  ["-1.46936", "1.35661", "0.75643", "-0.0574"],
  ["-0.17544", "1.99217", "0.85026", "-0.02763"],
  ["-0.8436", "0.42116", "35", "13.31921"],
  ["", "", "", ""],
  ["", "", "", ""],
];

function Results() {
  const plain = "flex h-[23px] shrink-0 items-center gap-1 rounded-tl-[7px] border-b border-[#9a9a9a] pl-[3px]";
  return (
    <section className={`${panel} shrink-0`}>
      <div className="flex">
        <button className={`${plain} pr-1`}><Icon name="mail" />Messages</button>
        <button className={`${plain} border-l pr-1`}><Icon name="progress" />Progress</button>
        <button className={`${plain} border-l pr-1`}><Icon name="log" />Log</button>
        <button className="relative z-10 flex h-[23px] shrink-0 items-center gap-1 rounded-tl-[7px] border-l border-[#7d9fc8] bg-linear-to-b from-[#b4d4f6] to-[#3f8fe6] pl-1">
          <Icon name="resultsTab" />
          Results
          <svg viewBox="0 0 12 12" className="ml-1 h-3 w-3">
            <path d="M1 1h3l2 2.500L8 1h3v2L8.500 6 11 9v2H8L6 8.500 4 11H1V9l2.500-3L1 3z" fill="#fff" stroke="#000" strokeWidth="1.200" />
          </svg>
        </button>
        <Swoop blue />
        <div className={`${strip} justify-end`}>
          {["sliders", "num885", "broom", "del", "plot", "magenta", "copy", "exp", "grid"].map((n) => <Tool key={n} name={n} />)}
          <Caret />
          <MinMax />
        </div>
      </div>
      <div className="border-2 border-[#3f8fe6]">
        <div className="border border-[#b5b5b5] bg-white">
          <table className="w-full table-fixed border-collapse text-left leading-[14px]">
            <colgroup>
              <col className="w-[71px]" />
              <col className="w-[72px]" />
              <col className="w-[72px]" />
              <col className="w-[72px]" />
              <col />
            </colgroup>
            <thead>
              <tr className="h-[15px] border-b border-[#cfcfcf]">
                {["x", "y", "z", "Value"].map((h) => (
                  <th key={h} className="border-r border-[#dcdcdc] p-0 pl-[2px] font-normal">{h}</th>
                ))}
                <th className="p-0" />
              </tr>
            </thead>
            <tbody>
              {data.map((r, i) => (
                <tr key={i} className="h-[15px] even:bg-[#f4f4f4]">
                  {r.map((c, j) => <td key={j} className="border-r border-[#c9c9c9] p-0 pl-[2px]">{c}</td>)}
                  <td className="p-0" />
                </tr>
              ))}
              <tr className="h-2">
                {[0, 1, 2, 3].map((j) => <td key={j} className="border-r border-[#c9c9c9] p-0" />)}
                <td className="p-0" />
              </tr>
            </tbody>
          </table>
        </div>
      </div>
    </section>
  );
}

/* ---------- window ---------- */

export default function App() {
  return (
    <div className="flex h-screen flex-col border-l border-black bg-[#e8e8e8] font-[Inter,sans-serif] text-[11px] text-black">
      <header className="relative flex h-[22px] shrink-0 items-center justify-center border-b border-[#b4b4b4] bg-linear-to-b from-[#ececec] to-[#d3d3d3] text-[#444]">
        <div className="absolute left-2 flex gap-2">
          <button aria-label="Close" className="flex size-3 items-center justify-center rounded-full border border-[#e0343a] bg-[#fc4650]">
            <span className="size-1 rounded-full bg-[#4c0508]" />
          </button>
          <button aria-label="Minimize window" className="size-3 rounded-full border border-[#e8a610] bg-[#fdb913]" />
          <button aria-label="Zoom window" className="size-3 rounded-full border border-[#0fb83a] bg-[#10d148]" />
        </div>
        <h1 className="text-[13px]">periodic-cylinder-length-sweep.mph</h1>
      </header>
      <nav className="flex h-[26px] shrink-0 items-center pl-[2px]">
        <Handle />
        {["new", "open", "save", "print"].map((n) => <Tool key={n} name={n} />)}
        <Sep />
        <Tool name="undo" /><Tool name="redo" />
        <Sep />
        <Tool name="help" /><Tool name="helpDoc" />
        <Handle />
        <Tool name="brush" /><Caret grey />
        <Sep />
        <Tool name="num885" pressed />
        {["line1", "line2", "disc", "diamond", "boxA", "boxB", "discs", "diamonds"].map((n) => <Tool key={n} name={n} />)}
        <Sep />
        {["cubeSlice", "cubeIso", "cube", "cubeTop", "cubeLine", "cubeArrow", "stream", "film"].map((n) => <Tool key={n} name={n} />)}
      </nav>
      <main className="flex min-h-0 flex-1 gap-[3px] pr-[3px] pl-1">
        <ModelBuilder />
        <Settings />
        <div className="flex min-w-0 flex-1 flex-col gap-[3px]">
          <Graphics />
          <Results />
        </div>
      </main>
      <footer className="flex h-[29px] shrink-0 items-center justify-end pr-[207px]">
        <div className="flex h-[26px] w-[149px] items-center border-x border-[#9a9a9a] pl-[7px]">836 MB | 5127 MB</div>
      </footer>
    </div>
  );
}
